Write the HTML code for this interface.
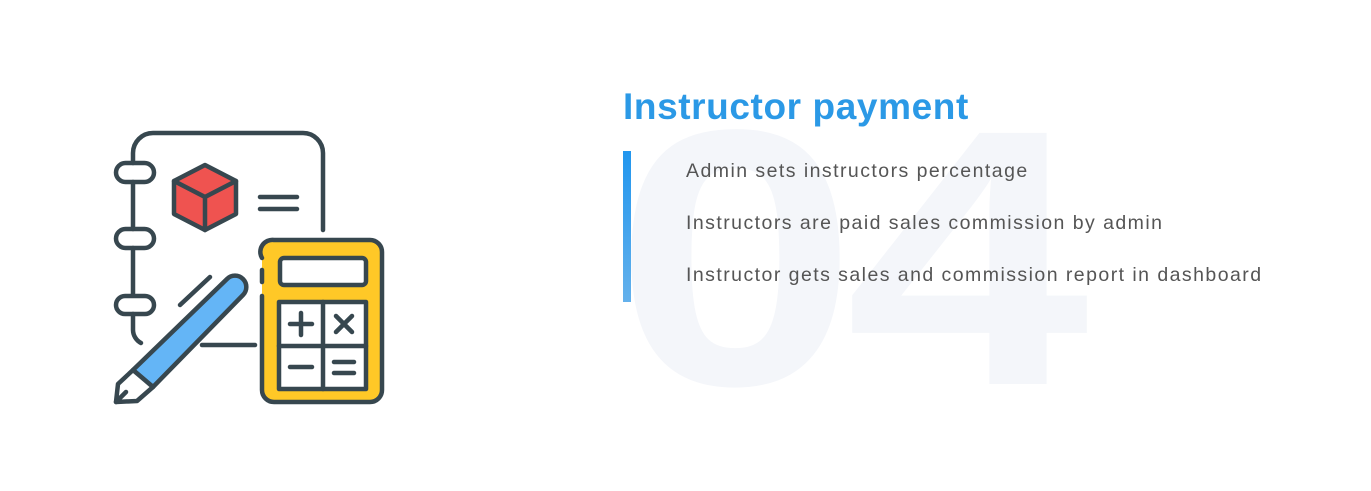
<!DOCTYPE html>
<html><head><style>
body{margin:0;width:1371px;height:491px;background:#fff;position:relative;overflow:hidden;font-family:"Liberation Sans",sans-serif}
.bg{position:absolute;left:614px;top:76px;font-size:365px;font-weight:bold;color:#f4f6fa;letter-spacing:-10px;line-height:1;transform:scaleX(1.2);transform-origin:0 0}
.t{position:absolute;left:623px;top:86px;font-size:37px;font-weight:bold;color:#2b99e6;letter-spacing:0.6px}
.bar{position:absolute;left:623px;top:151px;width:8px;height:151px;background:linear-gradient(#2196ee,#64b1ec)}
.li{position:absolute;left:686px;font-size:19.5px;color:#555;letter-spacing:1.45px}
</style></head><body>
<div class="bg">04</div>
<div class="t">Instructor payment</div>
<div class="bar"></div>
<div class="li" style="top:160px">Admin sets instructors percentage</div>
<div class="li" style="top:212px">Instructors are paid sales commission by admin</div>
<div class="li" style="top:264px">Instructor gets sales and commission report in dashboard</div>
<svg width="1371" height="491" style="position:absolute;left:0;top:0" fill="none" stroke="#37474f" stroke-width="4.5" stroke-linecap="round" stroke-linejoin="round">
<path d="M133 163V153a20 20 0 0 1 20-20h150a20 20 0 0 1 20 20v77"/>
<path d="M133 182v47M133 248v47M133 314v16a15 15 0 0 0 8 13"/>
<path d="M202 345h53"/>
<rect x="116" y="163" width="38" height="19" rx="9.5"/>
<rect x="116" y="229" width="38" height="19" rx="9.5"/>
<rect x="116" y="296" width="38" height="18" rx="9"/>
<path d="M205 165l31 16v33l-31 16-31-16v-33z" fill="#ef5350"/>
<path d="M174 181l31 16 31-16M205 197v33"/>
<path d="M260 197h37M260 209h37"/>
<path d="M262 252a12 12 0 0 1 12-12h96a12 12 0 0 1 12 12v138a12 12 0 0 1-12 12h-96a12 12 0 0 1-12-12z" fill="#ffc827" stroke="none"/>
<path d="M262 258a12 12 0 0 1 12-18h96a12 12 0 0 1 12 12v138a12 12 0 0 1-12 12h-96a12 12 0 0 1-12-12V296M262 270v12"/>
<rect x="280" y="258" width="86" height="27" rx="4" fill="#fff"/>
<rect x="279" y="302" width="87" height="87" fill="#fff"/>
<path d="M323 302v87M279 346h87"/>
<path d="M290 324h22M301 313v22M336 316l16 16M352 316l-16 16M290 367h22M334 362h20M334 373h20"/>
<path d="M180 305l30-28"/>
<path d="M227 279a11 11 0 0 1 16 16l-90 92-20-17z" fill="#64b5f6"/>
<path d="M133 370l20 17-16 14-21 1 2-18z" fill="#fff"/>
<path d="M126 392l-10 10"/>
</svg>
</body></html>
